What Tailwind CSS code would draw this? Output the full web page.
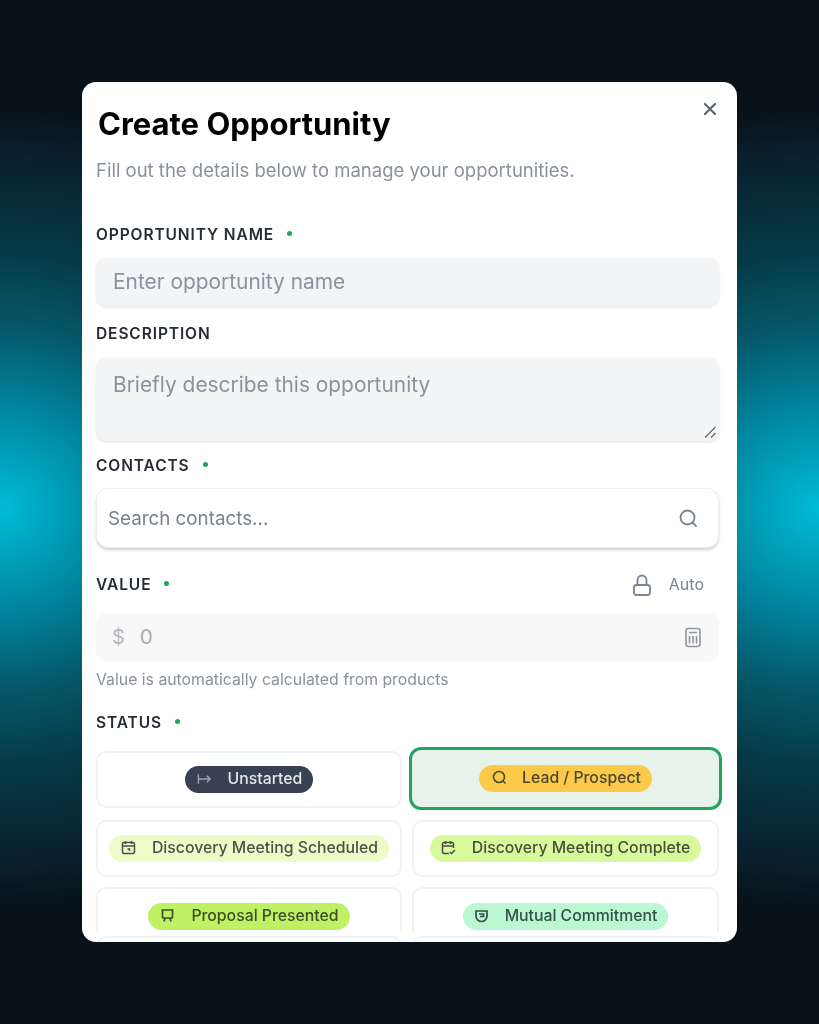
<!DOCTYPE html>
<html>
<head>
<meta charset="utf-8">
<script src="https://cdn.jsdelivr.net/npm/@tailwindcss/browser@4"></script>
</head>
<body class="m-0 bg-[#07121b]">
<div class="relative w-[819px] h-[1024px] overflow-hidden bg-[#07121b] font-['Inter',sans-serif]">
  <div class="absolute inset-0 bg-[radial-gradient(ellipse_440px_400px_at_0px_508px,#00bcd6_0%,#0086a0_25%,#05586a_45%,#053a48_64%,#0a1f2c_89%,transparent_100%)]"></div>
  <div class="absolute inset-0 bg-[radial-gradient(ellipse_440px_400px_at_819px_508px,#00bcd6_0%,#0086a0_25%,#05586a_45%,#053a48_64%,#0a1f2c_89%,transparent_100%)]"></div>
  <div class="absolute left-[82px] top-[82px] w-[655px] h-[860px] bg-white rounded-[14px] overflow-hidden">
   <div class="blur-[0.4px]">
    <svg class="absolute left-[621px] top-[20px] w-[14px] h-[14px]" viewBox="0 0 14 14" fill="none" stroke="#5b6470" stroke-width="2.2" stroke-linecap="round"><path d="M2 2l10 10M12 2L2 12"/></svg>
    <div class="pl-[16px] pt-[23px] text-[31px] leading-[38px] font-bold text-black">Create Opportunity</div>
    <div class="pl-[14px] pt-[15px] text-[18.5px] leading-[24px] text-[#8a919c]">Fill out the details below to manage your opportunities.</div>

    <div class="pl-[14px] pr-[18px] pt-[43px] flex flex-col">
      <div class="h-[20px] flex items-center gap-[13px] text-[15.5px] font-semibold tracking-[0.9px] text-[#262c35]">OPPORTUNITY NAME <span class="w-[5px] h-[5px] -translate-y-[2px] rounded-full bg-[#22a45d]"></span></div>
      <div class="mt-[13px] h-[48px] rounded-[10px] bg-[#f3f4f6] shadow-[0_1px_3px_rgba(0,0,0,0.12)] flex items-center pl-[17px] text-[20.9px] text-[#8b929d]">Enter opportunity name</div>
      <div class="mt-[18px] h-[20px] flex items-center text-[15.5px] font-semibold tracking-[0.9px] text-[#262c35]">DESCRIPTION</div>
      <div class="relative mt-[14px] h-[83px] rounded-[10px] bg-[#f3f4f6] shadow-[0_1px_3px_rgba(0,0,0,0.12)] pl-[17px] pt-[13px] text-[20.9px] leading-[28px] text-[#8b929d]">Briefly describe this opportunity
        <svg class="absolute right-[2px] bottom-[2px] w-[14px] h-[14px]" viewBox="0 0 14 14" fill="none" stroke="#666" stroke-width="1.2"><path d="M2 12.5L12.5 2M8 12.5l4.5-4.5"/></svg>
      </div>
      <div class="mt-[15px] h-[20px] flex items-center gap-[13px] text-[15.5px] font-semibold tracking-[0.9px] text-[#262c35]">CONTACTS <span class="w-[5px] h-[5px] -translate-y-[2px] rounded-full bg-[#22a45d]"></span></div>
      <div class="mt-[12px] h-[60px] pt-[3px] rounded-[12px] bg-white border border-[#eceef1] shadow-[0_2px_3px_rgba(0,0,0,0.18)] flex items-center justify-between pl-[11px] pr-[20px] text-[18.8px] text-[#79818c]">Search contacts...
        <svg class="w-[20px] h-[20px] -translate-y-[2px]" viewBox="0 0 20 20" fill="none" stroke="#7b8490" stroke-width="1.8" stroke-linecap="round"><circle cx="9.5" cy="9.5" r="7"/><path d="M14.5 14.5l3.5 3.5"/></svg>
      </div>
      <div class="mt-[27px] h-[20px] flex items-center text-[15.5px] font-semibold tracking-[0.9px] text-[#262c35]">
        <span>VALUE</span><span class="ml-[13px] w-[5px] h-[5px] -translate-y-[2px] rounded-full bg-[#22a45d]"></span>
        <svg class="ml-auto w-[20px] h-[23px]" viewBox="0 0 20 23" fill="none" stroke="#7b8490" stroke-width="1.8"><rect x="2" y="11" width="16" height="10" rx="2.5"/><path d="M5.5 11V6a4.5 4.5 0 0 1 9 0V11"/></svg>
        <span class="ml-[17px] mr-[15px] -translate-y-[1px] text-[16px] font-normal tracking-normal text-[#7b8490]">Auto</span>
      </div>
      <div class="mt-[18px] h-[48px] rounded-[10px] bg-[#f8f8f9] flex items-center pl-[16px] pr-[17px] text-[#b5b9bf]">
        <span class="text-[20px]">$</span><span class="ml-[15px] text-[20.5px] text-[#a9adb4]">0</span>
        <svg class="ml-auto w-[18px] h-[21px]" viewBox="0 0 18 21" fill="none" stroke="#8f959e" stroke-width="1.6"><rect x="2" y="1.5" width="14" height="18" rx="2.5"/><path d="M5 5.5h8M5.5 9v7.5M9 9v7.5M12.5 9v7.5"/></svg>
      </div>
      <div class="mt-[9px] h-[20px] flex items-center text-[15.8px] text-[#8a919c]">Value is automatically calculated from products</div>
      <div class="mt-[23px] h-[20px] flex items-center gap-[13px] text-[15.5px] font-semibold tracking-[0.9px] text-[#262c35]">STATUS <span class="w-[5px] h-[5px] -translate-y-[2px] rounded-full bg-[#22a45d]"></span></div>

      <div class="mt-[18px] grid grid-cols-[306px_1fr] gap-x-[10px]">
        <div class="h-[57px] rounded-[10px] border-2 border-[#f1f2f4] flex items-center justify-center">
          <span class="h-[27px] pb-[2px] pl-[12px] pr-[11px] rounded-full bg-[#374151] flex items-center gap-[16px] text-[15.8px] font-medium text-[#e5e7eb]">
            <svg class="w-[15px] h-[12px]" viewBox="0 0 16 12" fill="none" stroke="#9ca3af" stroke-width="1.5"><path d="M1.5 1v10M2 6h12M10.5 2.5L14 6l-3.5 3.5"/></svg>Unstarted</span>
        </div>
        <div class="h-[63px] -mt-[4px] -mb-[2px] -mx-[3px] rounded-[12px] border-[3px] border-[#22a45d] bg-[#e8f3ec] flex items-center justify-center">
          <span class="h-[27px] pb-[2px] pl-[13px] pr-[11px] rounded-full bg-[#fcc94a] flex items-center gap-[15px] text-[15.8px] font-medium text-[#4a4a2a]">
            <svg class="w-[15px] h-[15px]" viewBox="0 0 15 15" fill="none" stroke="#4a4a2a" stroke-width="1.6"><circle cx="7" cy="7" r="5.5"/><path d="M11 11l2.5 2.5"/></svg>Lead / Prospect</span>
        </div>
        <div class="mt-[12px] h-[57px] rounded-[10px] border-2 border-[#f1f2f4] flex items-center justify-center">
          <span class="h-[27px] pb-[2px] pl-[12px] pr-[11px] rounded-full bg-[#eefbc9] flex items-center gap-[16px] text-[15.8px] font-medium text-[#4b5147]">
            <svg class="w-[15px] h-[15px]" viewBox="0 0 15 15" fill="none" stroke="#4b5147" stroke-width="1.5"><rect x="1.5" y="2.5" width="12" height="11" rx="1.5"/><path d="M1.5 6h12M4.5 1v3M10.5 1v3M6.5 9h2v2"/></svg>Discovery Meeting Scheduled</span>
        </div>
        <div class="mt-[12px] h-[57px] rounded-[10px] border-2 border-[#f1f2f4] flex items-center justify-center">
          <span class="h-[27px] pb-[2px] pl-[11px] pr-[11px] rounded-full bg-[#d9f99d] flex items-center gap-[16px] text-[15.8px] font-medium text-[#47503a]">
            <svg class="w-[15px] h-[15px]" viewBox="0 0 15 15" fill="none" stroke="#47503a" stroke-width="1.5"><path d="M8 13.5H3A1.5 1.5 0 0 1 1.5 12V4A1.5 1.5 0 0 1 3 2.5h8A1.5 1.5 0 0 1 12.5 4v4M1.5 6h11M4.5 1v3M9.5 1v3M9 12l1.5 1.5L14 10"/></svg>Discovery Meeting Complete</span>
        </div>
        <div class="mt-[10px] h-[45px] rounded-t-[10px] border-2 border-b-0 border-[#f1f2f4] flex items-start justify-center pt-[14px]">
          <span class="h-[27px] pb-[2px] pl-[12px] pr-[11px] rounded-full bg-[#bef264] flex items-center gap-[16px] text-[15.8px] font-medium text-[#3f4d2a]">
            <svg class="w-[15px] h-[15px]" viewBox="0 0 15 15" fill="none" stroke="#3f4d2a" stroke-width="1.7"><path d="M1.5 2h12M2.5 2v7a1 1 0 0 0 1 1h8a1 1 0 0 0 1-1V2M5 10l-1 3.5M10 10l1 3.5"/></svg>Proposal Presented</span>
        </div>
        <div class="mt-[10px] h-[45px] rounded-t-[10px] border-2 border-b-0 border-[#f1f2f4] flex items-start justify-center pt-[14px]">
          <span class="h-[27px] pb-[2px] pl-[11px] pr-[11px] rounded-full bg-[#bbf7d0] flex items-center gap-[16px] text-[15.8px] font-medium text-[#33504a]">
            <svg class="w-[15px] h-[15px]" viewBox="0 0 15 15" fill="none" stroke="#33504a" stroke-width="1.7"><path d="M2 3h11v5a5.5 5.5 0 0 1-11 0zM5 6h4.5v2.5H6"/></svg>Mutual Commitment</span>
        </div>
        <div class="mt-[4px] h-[57px] rounded-[10px] border-2 border-[#f1f2f4]"></div>
        <div class="mt-[4px] h-[57px] rounded-[10px] border-2 border-[#f1f2f4]"></div>
      </div>
    </div>
   </div>
  </div>
</div>
</body>
</html>
